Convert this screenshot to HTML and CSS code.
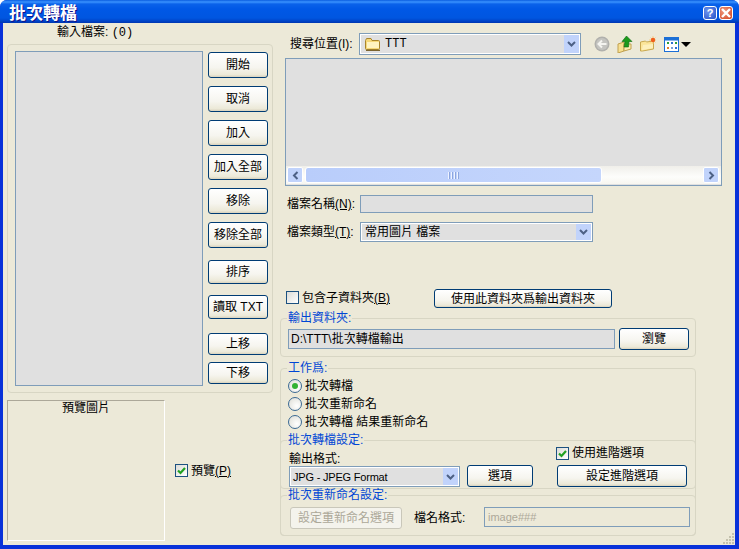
FILE: index.html
```html
<!DOCTYPE html>
<html lang="zh-Hant">
<head>
<meta charset="utf-8">
<title>批次轉檔</title>
<link rel="stylesheet" href="styles.css">
</head>
<body>
<div class="window">
  <header class="titlebar">
    <span class="title">批次轉檔</span>
    <span class="capbtn help">?</span>
    <span class="capbtn close"><svg width="10" height="10" viewBox="0 0 10 10"><path d="M1 1l8 8M9 1l-8 8" stroke="#fff" stroke-width="2.4"/></svg></span>
  </header>
  <main class="client">
    <section class="left">
      <div class="count-label">輸入檔案: <span class="mono">(0)</span></div>
      <div class="group input-group">
        <div class="field input-list"></div>
        <div class="btn-col">
          <button class="btn h26">開始</button>
          <button class="btn h26">取消</button>
          <button class="btn h26">加入</button>
          <button class="btn h26">加入全部</button>
          <button class="btn h26">移除</button>
          <button class="btn h26">移除全部</button>
          <button class="btn h24 m-sort">排序</button>
          <button class="btn h24 m-read">讀取 TXT</button>
          <button class="btn h22 m-up">上移</button>
          <button class="btn h22 m-down">下移</button>
        </div>
      </div>
      <div class="preview-row">
        <div class="preview">預覽圖片</div>
        <label class="check"><span class="box on"><svg width="11" height="11" viewBox="0 0 11 11"><path d="M2 5.500l2.500 2.500L9 3" fill="none" stroke="#21a121" stroke-width="2.200"/></svg></span><span>預覽<u>(P)</u></span></label>
      </div>
    </section>

    <section class="right">
      <div class="search-row">
        <span class="search-label">搜尋位置(I):</span>
        <div class="combo search-combo">
          <svg class="combo-icon" width="16" height="13" viewBox="0 0 16 13"><path d="M.5 2.500l1-2h4.500l1 2h6.500q1 0 1 1v7q0 1-1 1h-12q-1 0-1-1z" fill="#f6d878" stroke="#a8842c"/><path d="M2 4h12v6H2z" fill="#fff3c0"/><path d="M1 12.400h14" stroke="#7a6430" stroke-width="1.200"/></svg>
          <span class="mono combo-text">TTT</span>
          <span class="drop"><svg width="9" height="6" viewBox="0 0 9 6"><path d="M1 1l3.500 3.500L8 1" fill="none" stroke="#4d6185" stroke-width="2"/></svg></span>
        </div>
        <div class="toolbar">
          <svg width="16" height="16" viewBox="0 0 16 16"><circle cx="8" cy="8" r="7.500" fill="#b0b0ac"/><circle cx="8" cy="8" r="6" fill="#c4c4c0"/><path d="M12.500 8H5M8 4.500L4.500 8 8 11.500" fill="none" stroke="#f4f4f0" stroke-width="2"/></svg>
          <svg width="16" height="17" viewBox="0 0 16 17"><path d="M1 8l6-2v9l-6 2z" fill="#f8e090" stroke="#c0a050"/><path d="M7 8h7v5l-7 2z" fill="#fbeeb0" stroke="#c0a050"/><path d="M9.500 0L5 5.500h3l-1 5.500h4.500l.5-5.500H15z" fill="#1c9a1c" stroke="#0c6a10" stroke-width=".6"/></svg>
          <svg width="16" height="16" viewBox="0 0 16 16"><path d="M.5 15V6l5-1 1 1 7-1v8l-11 2z" fill="#fbe59a" stroke="#c8a850"/><path d="M3 9l10-1v4L2 14z" fill="#fdf0bd"/><path d="M13 0v8M9 4h7M10.500 1.500l5 5M15.500 1.500l-5 5" stroke="#f8c878" stroke-width=".8"/><circle cx="13" cy="4" r="2.200" fill="#f0601e"/></svg>
          <span class="views">
            <svg width="16" height="15" viewBox="0 0 16 15"><rect x=".5" y=".5" width="14" height="14" fill="#fff" stroke="#1b6fd6"/><rect x="1" y="1" width="13" height="2.500" fill="#1b6fd6"/><path d="M3 5h2v2H3z" fill="#2e9e3a"/><path d="M7 5h2v2H7z" fill="#2f6fd0"/><path d="M11 5h2v2h-2z" fill="#2e9e3a"/><path d="M3 10h2v2H3z" fill="#e0802a"/><path d="M7 10h2v2H7z" fill="#7aa0d8"/><path d="M11 10h2v2h-2z" fill="#2f6fd0"/></svg>
            <svg width="10" height="5" viewBox="0 0 10 5"><path d="M0 0h10L5 5z" fill="#000"/></svg>
          </span>
        </div>
      </div>

      <div class="field file-list">
        <div class="hscroll">
          <span class="sb-btn"><svg width="7" height="9" viewBox="0 0 7 9"><path d="M5.500 1L2 4.500 5.500 8" fill="none" stroke="#4d6185" stroke-width="2"/></svg></span>
          <span class="sb-thumb"><i></i><i></i><i></i><i></i></span>
          <span class="sb-btn"><svg width="7" height="9" viewBox="0 0 7 9"><path d="M1.500 1L5 4.500 1.500 8" fill="none" stroke="#4d6185" stroke-width="2"/></svg></span>
        </div>
      </div>

      <div class="name-row">
        <span class="form-label">檔案名稱<u>(N)</u>:</span>
        <div class="field name-input"></div>
      </div>
      <div class="type-row">
        <span class="form-label">檔案類型<u>(T)</u>:</span>
        <div class="combo type-combo">
          <span class="combo-text">常用圖片 檔案</span>
          <span class="drop"><svg width="9" height="6" viewBox="0 0 9 6"><path d="M1 1l3.500 3.500L8 1" fill="none" stroke="#4d6185" stroke-width="2"/></svg></span>
        </div>
      </div>

      <div class="sub-row">
        <label class="check"><span class="box"></span><span>包含子資料夾<u>(B)</u></span></label>
        <button class="btn use-btn">使用此資料夾爲輸出資料夾</button>
      </div>

      <fieldset class="fs output">
        <legend>輸出資料夾:</legend>
        <div class="output-row">
          <div class="field path">D:\TTT\批次轉檔輸出</div>
          <button class="btn browse">瀏覽</button>
        </div>
      </fieldset>

      <fieldset class="fs work">
        <legend>工作爲:</legend>
        <div class="radios">
          <label class="radio"><span class="dot on"></span><span>批次轉檔</span></label>
          <label class="radio"><span class="dot"></span><span>批次重新命名</span></label>
          <label class="radio"><span class="dot"></span><span>批次轉檔 結果重新命名</span></label>
        </div>
        <fieldset class="fs inner convert">
          <legend>批次轉檔設定:</legend>
          <div class="convert-row">
            <div class="fmt">
              <span class="fmt-label">輸出格式:</span>
              <div class="combo fmt-combo">
                <span class="combo-text latin">JPG - JPEG Format</span>
                <span class="drop"><svg width="9" height="6" viewBox="0 0 9 6"><path d="M1 1l3.500 3.500L8 1" fill="none" stroke="#4d6185" stroke-width="2"/></svg></span>
              </div>
            </div>
            <button class="btn opt">選項</button>
            <div class="adv">
              <label class="check adv-check"><span class="box on"><svg width="11" height="11" viewBox="0 0 11 11"><path d="M2 5.500l2.500 2.500L9 3" fill="none" stroke="#21a121" stroke-width="2.200"/></svg></span><span>使用進階選項</span></label>
              <button class="btn adv-btn">設定進階選項</button>
            </div>
          </div>
        </fieldset>
        <fieldset class="fs inner rename">
          <legend>批次重新命名設定:</legend>
          <div class="rename-row">
            <button class="btn disabled rename-btn">設定重新命名選項</button>
            <span class="pattern-label">檔名格式:</span>
            <div class="field pattern">image###</div>
          </div>
        </fieldset>
      </fieldset>
    </section>
    <svg class="grip" width="12" height="12" viewBox="0 0 12 12"><path d="M9 0h2v2H9zM6 3h2v2H6zM9 3h2v2H9zM3 6h2v2H3zM6 6h2v2H6zM9 6h2v2H9zM0 9h2v2H0zM3 9h2v2H3zM6 9h2v2H6zM9 9h2v2H9z" fill="#c4c1ad"/></svg>
  </main>
</div>
</body>
</html>
```

FILE: styles.css
```css
* { box-sizing: border-box; }
html, body { margin: 0; padding: 0; background: #fff; }
body {
  font: 12px/14px "Liberation Sans", "Noto Sans CJK TC", sans-serif;
  color: #000;
}
u { text-decoration: underline; }
.mono { font-family: "Liberation Mono", "Noto Sans CJK TC", monospace; }
.latin { font-size: 11px; letter-spacing: -.2px; }

.window {
  width: 739px;
  height: 549px;
  display: flex;
  flex-direction: column;
  background: #0831d9;
  border-radius: 7px 7px 0 0;
  overflow: hidden;
}
.titlebar {
  height: 23px;
  flex: none;
  display: flex;
  align-items: flex-start;
  padding: 6px 6px 0 9px;
  gap: 2px;
  background: linear-gradient(#0a5de0 0, #3a93ff 2px, #0a62ea 4px, #0058e6 9px, #0056e0 18px, #0044c8 21px, #0036b0 23px);
}
.title {
  flex: 1;
  margin-top: -2px;
  font-size: 17px;
  line-height: 20px;
  font-weight: 700;
  color: #fff;
  text-shadow: 1px 1px 0 #0f1089;
}
.capbtn {
  width: 14px;
  height: 14px;
  border: 1px solid #fff;
  border-radius: 3px;
  display: flex;
  align-items: center;
  justify-content: center;
  color: #fff;
  font: 700 11px/12px "Liberation Sans", sans-serif;
}
.help { background: radial-gradient(circle at 35% 35%, #6f96ee, #2450c8); }
.close { background: radial-gradient(circle at 35% 35%, #ee9a80, #d2401c); }

.client {
  position: relative;
  flex: 1;
  margin: 0 4px 4px 3px;
  background: #ece9d8;
  display: flex;
  min-height: 0;
}

/* left column */
.left { width: 270px; flex: none; padding-left: 4px; }
.count-label { height: 21px; padding: 2px 0 0 50px; }
.group {
  border: 1px solid #d8d6c4;
  border-radius: 4px;
}
.input-group {
  width: 266px;
  height: 349px;
  padding: 6px 0 0 7px;
  display: flex;
  gap: 5px;
}
.field {
  background: #e0e0e0;
  border: 1px solid #7f9db9;
}
.input-list { width: 188px; height: 335px; }
.btn-col {
  display: flex;
  flex-direction: column;
  gap: 8px;
  padding-top: 1px;
}
.btn {
  font: inherit;
  color: #000;
  padding: 0;
  width: 60px;
  border: 1px solid #003c74;
  border-radius: 3px;
  background: linear-gradient(#fff, #f6f5ef 60%, #ece9d8 90%, #d8d2bd);
}
.h26 { height: 26px; }
.h24 { height: 24px; }
.h22 { height: 22px; }
.btn-col .m-sort { margin-top: 4px; }
.btn-col .m-read { margin-top: 3px; }
.btn-col .m-up { margin-top: 6px; }
.btn-col .m-down { margin-top: -1px; }
.preview-row {
  margin-top: 7px;
  display: flex;
  align-items: center;
  gap: 10px;
}
.preview {
  width: 158px;
  height: 141px;
  border: 1px solid;
  border-color: #aca899 #fff #fff #aca899;
  text-align: center;
}
.check { display: flex; align-items: center; gap: 3px; white-space: nowrap; }
.box {
  width: 13px;
  height: 13px;
  flex: none;
  border: 1px solid #1c5180;
  background: linear-gradient(135deg, #dcdcd7, #fff);
  display: flex;
  align-items: center;
  justify-content: center;
}
.box svg { display: block; }

/* right column */
.right { width: 462px; flex: none; padding: 10px 0 0 7px; }
.search-row { display: flex; align-items: center; height: 22px; padding-left: 10px; }
.search-label { width: 69px; flex: none; white-space: nowrap; }
.combo {
  display: flex;
  align-items: center;
  background: #e0e0e0;
  border: 1px solid #7f9db9;
  outline: 1px solid #fff;
  outline-offset: -2px;
  white-space: nowrap;
}
.search-combo { width: 222px; height: 22px; padding: 0 1px 0 5px; }
.combo-icon { flex: none; margin-right: 4px; }
.combo-text { flex: 1; }
.drop {
  width: 15px;
  flex: none;
  align-self: stretch;
  margin: 1px 0;
  background: #c1d3fb;
  display: flex;
  align-items: center;
  justify-content: center;
}
.toolbar {
  display: flex;
  align-items: center;
  gap: 7px;
  margin-left: 13px;
}
.toolbar svg { display: block; flex: none; }
.views { display: flex; align-items: center; gap: 1px; margin-left: 1px; }

.file-list {
  width: 437px;
  height: 128px;
  margin: 3px 0 0 5px;
  display: flex;
  align-items: flex-end;
  padding: 0 0 1px;
  background: #e0e0e0;
}
.hscroll {
  width: 100%;
  height: 18px;
  padding: 1px 2px 1px 1px;
  display: flex;
  gap: 2px;
  background: linear-gradient(#f0efea, #fdfdfb 60%, #f7f6f0);
}
.sb-btn {
  width: 16px;
  flex: none;
  background: #c1d3fb;
  border: 1px solid #fff;
  border-radius: 2px;
  display: flex;
  align-items: center;
  justify-content: center;
}
.sb-thumb {
  width: 297px;
  margin-right: auto;
  background: linear-gradient(90deg, #b9cdfb, #c5d6fc);
  border: 1px solid #fff;
  border-radius: 3px;
  display: flex;
  align-items: center;
  justify-content: center;
  gap: 1px;
}
.sb-thumb i { width: 1px; height: 7px; background: #eef3ff; box-shadow: 1px 0 0 #8ca6e0; margin-right: 1px; }

.name-row { display: flex; align-items: center; margin: 9px 0 0 7px; }
.type-row { display: flex; align-items: center; margin: 9px 0 0 7px; }
.form-label { width: 73px; flex: none; white-space: nowrap; }
.name-input { width: 233px; height: 18px; }
.type-combo { width: 233px; height: 20px; padding: 0 1px 0 4px; }

.sub-row { display: flex; align-items: center; height: 19px; margin: 47px 0 0 6px; }
.sub-row .check { width: 148px; margin-top: -2px; }
.use-btn { width: 178px; height: 19px; }

.fs {
  margin: 0;
  padding: 0;
  min-width: 0;
  border: 1px solid #d8d6c4;
  border-radius: 4px;
}
.fs legend {
  margin-left: 6px;
  padding: 0 1px;
  font-size: 12px;
  line-height: 14px;
  color: #0046d5;
}
.right > .fs { width: 416px; }
.output { margin-top: 3px; }
.output-row { display: flex; align-items: center; gap: 4px; padding: 3px 6px 6px 7px; }
.path { width: 327px; height: 20px; line-height: 18px; padding-left: 2px; }
.browse { width: 70px; height: 22px; }

.work { margin-top: 4px; }
.radios { padding: 2px 0 0 7px; }
.radio { display: flex; align-items: center; gap: 3px; height: 18px; }
.dot {
  width: 14px;
  height: 14px;
  flex: none;
  border-radius: 50%;
  border: 1px solid #3b6a94;
  background: radial-gradient(circle at 65% 65%, #fff, #dcdcd4);
  display: flex;
  align-items: center;
  justify-content: center;
}
.dot.on::after {
  content: "";
  width: 6px;
  height: 6px;
  border-radius: 50%;
  background: #31b233;
}
.inner { margin: 2px -1px 0; }
.convert-row { display: flex; align-items: flex-end; padding: 0 0 1px 8px; height: 41px; }
.fmt { width: 171px; flex: none; }
.fmt-label { display: block; height: 19px; padding-top: 5px; }
.fmt-combo { width: 171px; height: 21px; padding: 0 1px 0 3px; }
.opt { width: 66px; height: 22px; margin-left: 7px; flex: none; }
.adv { margin-left: 24px; display: flex; flex-direction: column; gap: 5px; }
.adv-check { margin-left: -1px; }
.adv-btn { width: 130px; height: 22px; }

.rename { margin: -1px -1px -1px; }
.rename-row { display: flex; align-items: flex-start; padding: 5px 0 6px 9px; }
.rename-btn { width: 112px; height: 22px; }
.disabled {
  color: #aca899;
  border-color: #c9c7ba;
  background: #f4f3ec;
}
.pattern-label { width: 70px; margin-left: 12px; padding-top: 4px; }
.pattern {
  width: 206px;
  height: 20px;
  padding-left: 3px;
  font-size: 11px;
  line-height: 18px;
  color: #aca899;
  background: #ece9d8;
}
.grip { position: absolute; right: 0; bottom: 0; }
```
